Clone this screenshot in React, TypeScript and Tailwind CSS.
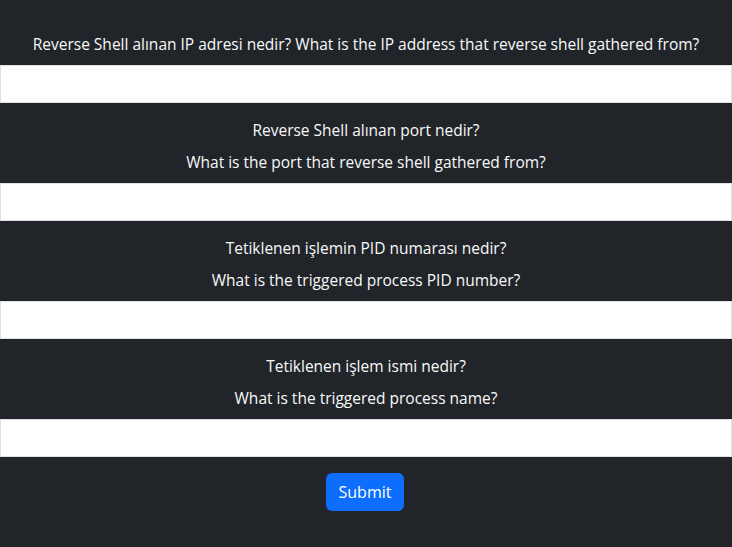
const questions = [
  {
    lines: ["Reverse Shell alınan IP adresi nedir? What is the IP address that reverse shell gathered from?"],
    name: "ip",
  },
  {
    lines: ["Reverse Shell alınan port nedir?", "What is the port that reverse shell gathered from?"],
    name: "port",
  },
  {
    lines: ["Tetiklenen işlemin PID numarası nedir?", "What is the triggered process PID number?"],
    name: "pid",
  },
  {
    lines: ["Tetiklenen işlem ismi nedir?", "What is the triggered process name?"],
    name: "process",
  },
];

export default function App() {
  return (
    <div
      className="min-h-[547px] bg-[#212529] text-[#f8f9fa] text-[15.5px] leading-6"
      style={{ fontFamily: '"Open Sans", "Noto Sans", sans-serif' }}
    >
      <form className="flex flex-col">
        {questions.map((q, i) => (
          <div key={q.name} className="flex flex-col">
            <div className={`flex flex-col items-center gap-2 text-center pb-[9px] ${i === 0 ? "pt-8" : "pt-[15px]"}`}>
              {q.lines.map((line) => (
                <label key={line} htmlFor={q.name} className="block">
                  {line}
                </label>
              ))}
            </div>
            <input
              id={q.name}
              name={q.name}
              type="text"
              className="block w-full h-[38px] bg-white border border-[#dee2e6] px-3 text-[#212529] outline-none"
            />
          </div>
        ))}
        <div className="flex justify-center pt-4 pr-[2px]">
          <button
            type="button"
            className="h-[38px] w-[78px] rounded-md bg-[#0d6efd] text-white text-[16px]"
          >
            Submit
          </button>
        </div>
      </form>
    </div>
  );
}
